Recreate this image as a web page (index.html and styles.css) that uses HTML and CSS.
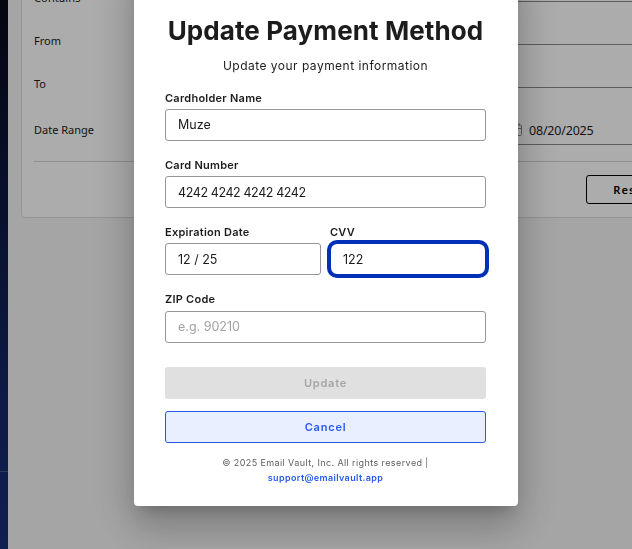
FILE: index.html
```html
<!DOCTYPE html>
<html lang="en">
<head>
<meta charset="utf-8">
<title>Email Vault</title>
<link rel="stylesheet" href="styles.css">
</head>
<body>
<div class="app">
  <aside class="sidebar"><hr class="sidebar-rule"></aside>
  <main class="content">
    <section class="search-card">
      <div class="filters">
        <div class="filter filter-first"><span class="filter-name contains">Contains</span><span class="control"></span></div>
        <div class="filter"><span class="filter-name">From</span><span class="control"></span></div>
        <div class="filter"><span class="filter-name">To</span><span class="control"></span></div>
        <div class="filter filter-date">
          <span class="filter-name range">Date Range</span>
          <span class="control">
            <svg class="calendar" viewBox="0 0 12 13" width="12" height="13" fill="none" stroke="#888"><rect x=".5" y="2" width="11" height="10.5" rx="1"/><path d="M.5 5.5h11M3 0v3M9 0v3"/></svg>
            <span class="date">08/20/2025</span>
          </span>
        </div>
      </div>
      <div class="actions"><button class="reset" type="button">Reset</button></div>
    </section>
  </main>
</div>
<div class="backdrop">
  <form class="dialog">
    <h1 class="title">Update Payment Method</h1>
    <p class="subtitle">Update your payment information</p>
    <div class="field">
      <label class="label" for="name">Cardholder Name</label>
      <input class="input" id="name" value="Muze">
    </div>
    <div class="field">
      <label class="label" for="card">Card Number</label>
      <input class="input card-number" id="card" value="4242 4242 4242 4242">
    </div>
    <div class="row">
      <div class="field">
        <label class="label" for="expiry">Expiration Date</label>
        <input class="input expiry" id="expiry" value="12 / 25">
      </div>
      <div class="field">
        <label class="label" for="cvv">CVV</label>
        <input class="input focused" id="cvv" value="122">
      </div>
    </div>
    <div class="field zip">
      <label class="label" for="zip">ZIP Code</label>
      <input class="input" id="zip" placeholder="e.g. 90210">
    </div>
    <button class="button update" type="button" disabled>Update</button>
    <button class="button cancel" type="button">Cancel</button>
    <footer class="footer">
      <div class="copyright">© 2025 Email Vault, Inc. All rights reserved |</div>
      <a class="support">support@emailvault.app</a>
    </footer>
  </form>
</div>
</body>
</html>
```
FILE: styles.css
```css
* { box-sizing: border-box; }
body {
  margin: 0;
  height: 549px;
  overflow: hidden;
  font-family: "Noto Sans", "Liberation Sans", sans-serif;
  color: #1c1c1c;
}
.app { display: flex; height: 549px; background: #f4f4f4; overflow: hidden; }
.sidebar {
  flex: 0 0 8px;
  padding-top: 471px;
  background: linear-gradient(#060a18, #0b153a 30%, #142869 75%, #182e78);
}
.sidebar-rule { height: 1px; margin: 0; border: 0; background: #46577f; }
.content { flex: 1; padding-left: 13px; min-width: 0; }
.search-card {
  width: 660px;
  height: 218px;
  padding-left: 12px;
  background: #fefefe;
  border: 1px solid #dcdcdc;
  border-top: 0;
  border-radius: 0 0 5px 5px;
}
.filters { height: 162px; border-bottom: 1px solid #d2d2d2; }
.filter { display: flex; height: 43px; font-size: 11px; line-height: 16px; }
.filter-first { height: 2px; }
.filter-name { flex: 0 0 130px; margin-top: 31px; letter-spacing: 0; }
.filter-name.contains { margin-top: -10px; letter-spacing: .15px; }
.filter-name.range { margin-top: 34px; }
.control { display: flex; flex: 1; padding-left: 347px; border-bottom: 1px solid #8a8a8a; }
.filter-date { height: 57px; }
.calendar { flex: none; margin: 35px 0 0 -1px; }
.date { margin: 35px 0 0 7px; font-size: 12.5px; letter-spacing: -.2px; }
.actions { padding: 13px 0 0 552px; }
.reset {
  width: 90px;
  height: 29px;
  padding: 0;
  background: transparent;
  border: 1px solid #000;
  border-radius: 3px;
  font: 600 11px "Noto Sans", sans-serif;
  letter-spacing: 1.1px;
}
.backdrop { position: fixed; inset: 0; background: rgba(0, 0, 0, .32); }
.dialog {
  width: 384px;
  height: 546px;
  margin: -40px 0 0 134px;
  padding: 54px 32px 0 31px;
  background: #fff;
  border-radius: 4px;
  box-shadow: 0 11px 15px -7px rgba(0, 0, 0, .2), 0 24px 38px 3px rgba(0, 0, 0, .14), 0 9px 46px 8px rgba(0, 0, 0, .12);
  font-family: Inter, "Liberation Sans", sans-serif;
}
.title { margin: 0; font-size: 26px; font-weight: 700; line-height: 34px; text-align: center; letter-spacing: .1px; white-space: nowrap; }
.subtitle { margin: 9px 0 16px; font-size: 12px; line-height: 18px; text-align: center; letter-spacing: .48px; }
.field { display: flex; flex-direction: column; gap: 2px; margin-bottom: 17px; }
.label { font-size: 11px; font-weight: 600; line-height: 15px; margin-bottom: 1px; letter-spacing: .25px; }
.input {
  width: 100%;
  height: 32px;
  padding: 0 12px 1px;
  background: #fff;
  border: 1px solid #979797;
  border-radius: 3px;
  color: #1c1c1c;
  font: 12.5px Inter, "Liberation Sans", sans-serif;
}
.card-number { padding-bottom: 0; letter-spacing: -.4px; }
.expiry { padding-bottom: 0; }
.input::placeholder { color: #a3a3a3; opacity: 1; }
.row { display: grid; grid-template-columns: 156px 156px; gap: 9px; }
.focused { padding-bottom: 0; border-color: transparent; border-radius: 7px; outline: 4px solid #0030b5; outline-offset: -1px; }
.zip { gap: 3px; margin-bottom: 24px; }
.button { display: block; width: 100%; height: 32px; padding: 0; border-radius: 3px; font: 600 11px Inter, "Liberation Sans", sans-serif; letter-spacing: .8px; }
.update { margin-bottom: 12px; background: #e0e0e0; border: 0; color: #a6a6a6; }
.cancel { background: #e9effe; border: 1px solid #2358e8; color: #2559f4; }
.footer { padding-top: 12px; text-align: center; font-size: 9px; line-height: 15px; letter-spacing: .4px; color: #5e5e5e; }
.support { display: block; font-weight: 600; letter-spacing: .37px; color: #2559f4; }
```
